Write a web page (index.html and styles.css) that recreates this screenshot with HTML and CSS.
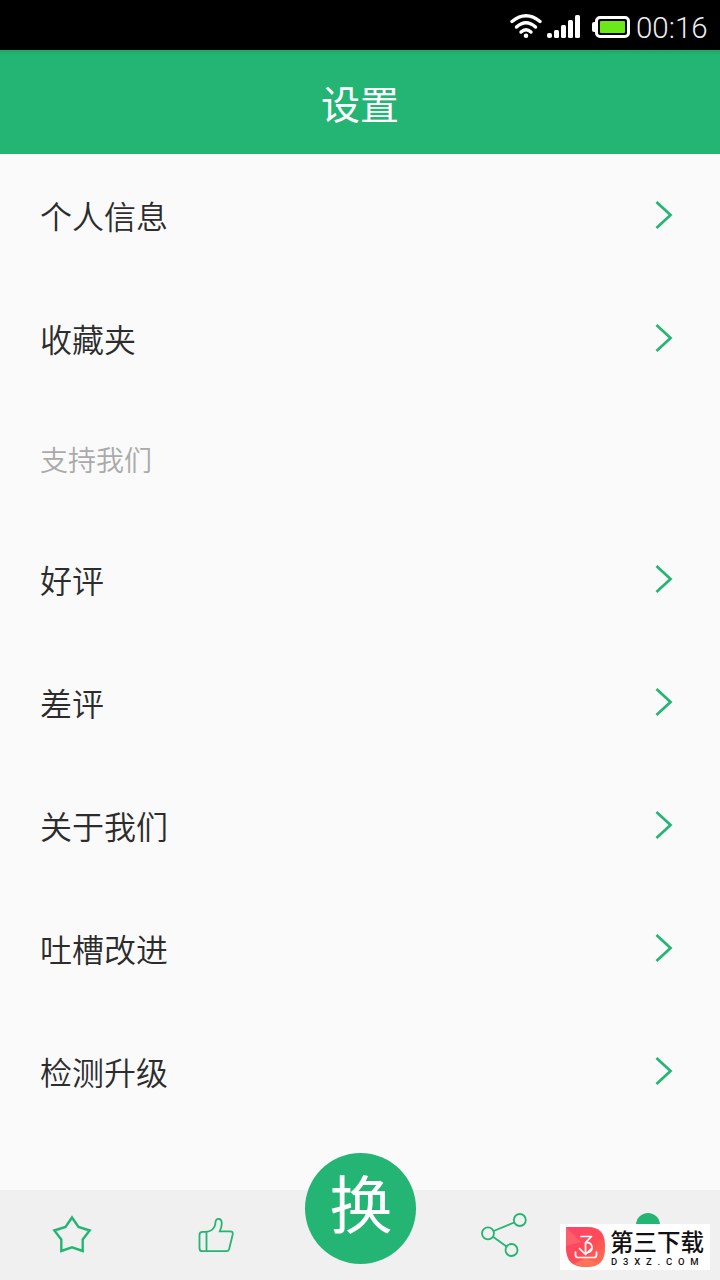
FILE: index.html
```
<!DOCTYPE html>
<html lang="zh-CN">
<head>
<meta charset="utf-8">
<title>设置</title>
<link rel="stylesheet" href="styles.css">
</head>
<body>
<div class="app">
  <div class="status">
    <svg class="status-icons" width="122" height="50" viewBox="0 0 122 50" fill="none">
      <g stroke="#fff" stroke-width="3.4" stroke-linecap="round">
        <path d="M2 21.500Q16 10 30 21.500"/>
        <path d="M6.500 27Q16 18.500 25.500 27"/>
        <path d="M11 32Q16 27.500 21 32"/>
      </g>
      <circle cx="16" cy="35.800" r="2.300" fill="#fff"/>
      <g fill="#fff">
        <rect x="37" y="33" width="5" height="5" rx="2"/>
        <rect x="44" y="30" width="5" height="8" rx="1.500"/>
        <rect x="51" y="25" width="5" height="13" rx="1.500"/>
        <rect x="58" y="20" width="5" height="18" rx="1.500"/>
        <rect x="65" y="15" width="5" height="23" rx="1.500"/>
        <rect x="82" y="22" width="5" height="10" rx="2"/>
      </g>
      <rect x="86.500" y="17.500" width="32" height="19" rx="3.500" stroke="#fff" stroke-width="3"/>
      <rect x="90" y="21" width="25" height="12" rx="1" fill="#6be817"/>
    </svg>
    <span class="time">00:16</span>
  </div>
  <header class="header">设置</header>
  <main class="list">
    <div class="row"><span>个人信息</span><svg class="chevron" viewBox="0 0 18 30"><path d="M1.500 2L15.500 15L1.500 28"/></svg></div>
    <div class="row"><span>收藏夹</span><svg class="chevron" viewBox="0 0 18 30"><path d="M1.500 2L15.500 15L1.500 28"/></svg></div>
    <div class="section">支持我们</div>
    <div class="row"><span>好评</span><svg class="chevron" viewBox="0 0 18 30"><path d="M1.500 2L15.500 15L1.500 28"/></svg></div>
    <div class="row"><span>差评</span><svg class="chevron" viewBox="0 0 18 30"><path d="M1.500 2L15.500 15L1.500 28"/></svg></div>
    <div class="row"><span>关于我们</span><svg class="chevron" viewBox="0 0 18 30"><path d="M1.500 2L15.500 15L1.500 28"/></svg></div>
    <div class="row"><span>吐槽改进</span><svg class="chevron" viewBox="0 0 18 30"><path d="M1.500 2L15.500 15L1.500 28"/></svg></div>
    <div class="row"><span>检测升级</span><svg class="chevron" viewBox="0 0 18 30"><path d="M1.500 2L15.500 15L1.500 28"/></svg></div>
  </main>
  <nav class="tabs">
    <div class="tab"><svg width="144" height="90" viewBox="0 0 144 90"><path class="line star" d="M72 27.500L78.500 37L89.700 40.500L82.700 49.500V61L72 57.300L61.300 61V49.500L54.300 40.500L65.500 37Z"/></svg></div>
    <div class="tab"><svg width="144" height="90" viewBox="0 0 144 90"><path class="line" d="M58.500 61.200H82.500Q84.500 61.200 85.100 59.300L88.700 44.500Q89.300 41.300 86.300 41.300H75.800C78.200 36.500 79 28.800 74.500 28.800C70.800 28.800 71.700 31.800 71.200 34.500C70.300 39 66.500 41.800 62 41.800H58.500Q55.500 41.800 55.500 44.800V58.200Q55.500 61.200 58.500 61.200ZM62.500 42V61"/></svg></div>
    <div class="tab"></div>
    <div class="tab"><svg width="144" height="90" viewBox="0 0 144 90"><g class="line"><circle cx="56" cy="43.300" r="6"/><circle cx="87.800" cy="30" r="6"/><circle cx="79.500" cy="60" r="6"/><path d="M61.600 41L82.200 32.500M61 46.700L74.500 56.500"/></g></svg></div>
    <div class="tab"><svg width="144" height="90" viewBox="0 0 144 90"><circle cx="72" cy="35" r="12" fill="#24b574"/></svg></div>
    <div class="swap">换</div>
    <div class="watermark">
      <svg class="mark" width="40" height="40" viewBox="0 0 40 40">
        <defs><linearGradient id="coral" x1="0" y1="0" x2="1" y2="1"><stop offset="0" stop-color="#ff426b"/><stop offset=".55" stop-color="#ff4c57"/><stop offset="1" stop-color="#ff7650"/></linearGradient></defs>
        <path d="M0 0H22Q39 0 39 18V22Q39 40 21 40H19Q0 40 0 21Z" fill="url(#coral)"/>
        <path d="M0 0L15 15L0 19Z" fill="#ff5f6a"/>
        <path d="M20 31L8 37Q21 43 32 36Z" fill="#ff7358"/>
        <g fill="none" stroke="#fff" stroke-width="1.700" stroke-linecap="round" stroke-linejoin="round">
          <path d="M15 9.500H25.500L19.500 15.500C27.500 15 28 24.500 22 25.500M19.500 15.500V27M13.500 21.500L19.500 27.500L25.500 21.500"/>
          <path d="M9.500 25V28Q9.500 30.500 12 30.500H28Q30.500 30.500 30.500 28V25"/>
        </g>
      </svg>
      <div class="brand"><div class="brand-name">第三下载</div><div class="brand-url">D3XZ.COM</div></div>
    </div>
  </nav>
</div>
</body>
</html>
```
FILE: styles.css
```
body {
  margin: 0;
  font-family: "Noto Sans CJK SC", sans-serif;
  font-weight: 350;
  color: #2c2c2c;
}
.app {
  width: 720px;
  height: 1280px;
  display: flex;
  flex-direction: column;
  background: #fafafa;
  overflow: hidden;
}
.status {
  height: 50px;
  flex: none;
  display: flex;
  align-items: center;
  justify-content: flex-end;
  background: #000;
}
.time {
  width: 88px;
  padding: 6px 0 0 4px;
  box-sizing: border-box;
  font: 300 29.5px/34px Roboto, sans-serif;
  color: #eee;
}
.header {
  height: 104px;
  flex: none;
  background: linear-gradient(#21a56a, #24b574 5px);
  color: #fff;
  font-size: 39px;
  font-weight: 400;
  line-height: 104px;
  text-align: center;
}
.list {
  flex: 1;
}
.row {
  height: 123px;
  padding: 0 47px 2px 40px;
  box-sizing: border-box;
  display: flex;
  align-items: center;
  justify-content: space-between;
  font-size: 32px;
  line-height: 48px;
}
.chevron {
  width: 18px;
  height: 30px;
  fill: none;
  stroke: #24b574;
  stroke-width: 2.7;
}
.section {
  height: 118px;
  padding-left: 40px;
  font-size: 28px;
  line-height: 119px;
  color: #aaa;
}
.tabs {
  position: relative;
  height: 90px;
  flex: none;
  display: flex;
  background: #f0f0f0;
}
.tab {
  width: 144px;
  height: 90px;
}
.line {
  fill: none;
  stroke: #24b574;
  stroke-width: 1.8;
}
.star {
  stroke-width: 2.4;
}
.swap {
  position: absolute;
  left: 304.5px;
  top: -37.5px;
  width: 111px;
  height: 111px;
  border-radius: 50%;
  background: #24b574;
  color: #fff;
  font-size: 63px;
  font-weight: 400;
  line-height: 95px;
  text-align: center;
  text-indent: 2px;
}
.watermark {
  position: absolute;
  left: 560px;
  top: 34px;
  width: 150px;
  height: 46px;
  padding: 3px 0 0 6px;
  box-sizing: border-box;
  display: flex;
  gap: 4px;
  background: #fff;
  color: #111;
}
.brand {
  display: flex;
  flex-direction: column;
  gap: 3px;
}
.brand-name {
  font-size: 23.5px;
  line-height: 26px;
  margin-top: 1px;
  font-weight: 500;
  white-space: nowrap;
}
.brand-url {
  padding-left: 1px;
  font: 500 9.5px/9px Roboto, sans-serif;
  letter-spacing: 5.8px;
  white-space: nowrap;
}
```
